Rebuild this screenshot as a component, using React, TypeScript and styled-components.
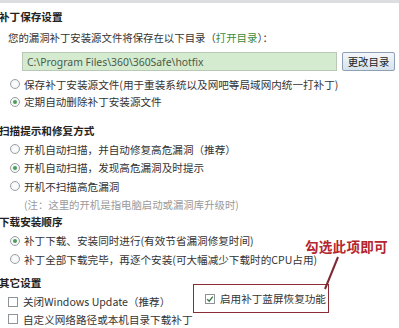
import React from "react";
import styled, { createGlobalStyle } from "styled-components";

const Global = createGlobalStyle`
  html, body { margin: 0; padding: 0; background: #ffffff; }
  body { font-family: "Noto Sans CJK SC", "Noto Sans", sans-serif; color: #333; }
  * { box-sizing: border-box; }
`;

const Page = styled.div`
  position: relative;
  width: 399px;
  height: 328px;
  overflow: hidden;
  background: #fff;
  display: flex;
  flex-direction: column;
`;

const TopLine = styled.div`
  height: 3px;
  background: #dcdfe0;
  flex: none;
`;

const Heading = styled.div<{ $mt: number }>`
  height: 18px;
  margin-top: ${(p) => p.$mt}px;
  margin-left: -1px;
  display: flex;
  align-items: center;
  font-size: 10.6px;
  font-weight: 700;
  color: #222;
  white-space: nowrap;
`;

const Desc = styled.div`
  height: 18px;
  margin-top: 3px;
  padding-left: 8px;
  display: flex;
  align-items: center;
  font-size: 10.4px;
  color: #333;
  white-space: nowrap;
`;

const Link = styled.span`
  color: #3d8a3a;
`;

const InputRow = styled.div`
  margin-top: 6px;
  height: 20px;
  display: flex;
  align-items: stretch;
  padding-left: 22px;
  gap: 5px;
`;

const PathBox = styled.div`
  width: 315px;
  background: #d4ebcf;
  border: 1px solid #b8c8b4;
  display: flex;
  align-items: center;
  padding-left: 4px;
  font-family: "Noto Sans", "DejaVu Sans", sans-serif;
  font-size: 10.4px;
  color: #4b5a49;
  white-space: nowrap;
`;

const Button = styled.div`
  width: 53px;
  border: 1px solid #8c9fb4;
  border-radius: 2px;
  background: linear-gradient(#f4f7fa, #d6e2ec);
  display: flex;
  align-items: center;
  justify-content: center;
  font-size: 10.4px;
  color: #222;
`;

const Row = styled.div<{ $h?: number; $mt?: number }>`
  height: ${(p) => p.$h ?? 19}px;
  margin-top: ${(p) => p.$mt ?? 0}px;
  display: flex;
  align-items: center;
  padding-left: 10px;
  font-size: 10.6px;
  color: #333;
  white-space: nowrap;
`;

const Radio = styled.span<{ $on?: boolean }>`
  width: 10px;
  height: 10px;
  border-radius: 50%;
  border: 1px solid #9aa0a4;
  background: radial-gradient(circle, #ffffff 0%, #eef0f1 100%);
  display: inline-flex;
  align-items: center;
  justify-content: center;
  margin-right: 4px;
  flex: none;
  &::after {
    content: "";
    display: ${(p) => (p.$on ? "block" : "none")};
    width: 4px;
    height: 4px;
    border-radius: 50%;
    background: #4a9a5a;
  }
`;

const Note = styled.div`
  height: 18px;
  padding-left: 24px;
  display: flex;
  align-items: center;
  font-size: 10.4px;
  color: #9a9a9a;
  white-space: nowrap;
`;

const CheckRow = styled.div`
  position: relative;
  height: 18px;
  display: flex;
  align-items: center;
  padding-left: 8px;
  font-size: 10.6px;
  color: #333;
  white-space: nowrap;
`;

const Check = styled.span`
  width: 10px;
  height: 10px;
  border: 1px solid #8d9396;
  background: #fff;
  margin-right: 5px;
  flex: none;
  display: inline-flex;
  align-items: center;
  justify-content: center;
`;

const HighlightBox = styled.div`
  position: absolute;
  left: 193px;
  top: -9px;
  width: 136px;
  height: 29px;
  border: 1.5px solid #8a2c36;
  background: #fff;
  display: flex;
  align-items: center;
  padding-left: 11px;
  font-size: 10.6px;
  color: #333;
`;

const Annotation = styled.div`
  position: absolute;
  left: 305px;
  top: 236px;
  font-size: 13.6px;
  font-weight: 700;
  color: #b3262f;
  white-space: nowrap;
  letter-spacing: 0.2px;
`;

const Pointer = styled.svg`
  position: absolute;
  left: 318px;
  top: 252px;
`;

export default function App() {
  return (
    <>
      <Global />
      <Page>
        <TopLine />
        <Heading $mt={5}>补丁保存设置</Heading>
        <Desc>
          您的漏洞补丁安装源文件将保存在以下目录（<Link>打开目录</Link>）：
        </Desc>
        <InputRow>
          <PathBox>C:\Program Files\360\360Safe\hotfix</PathBox>
          <Button>更改目录</Button>
        </InputRow>
        <Row $h={18} $mt={4}>
          <Radio />
          保存补丁安装源文件(用于重装系统以及网吧等局域网内统一打补丁)
        </Row>
        <Row $h={18}>
          <Radio $on />
          定期自动删除补丁安装源文件
        </Row>
        <Heading $mt={11}>扫描提示和修复方式</Heading>
        <Row $mt={1}>
          <Radio />
          开机自动扫描，并自动修复高危漏洞（推荐）
        </Row>
        <Row>
          <Radio $on />
          开机自动扫描，发现高危漏洞及时提示
        </Row>
        <Row>
          <Radio />
          开机不扫描高危漏洞
        </Row>
        <Note>(注：这里的开机是指电脑启动或漏洞库升级时)</Note>
        <Heading $mt={0}>下载安装顺序</Heading>
        <Row $mt={1}>
          <Radio $on />
          补丁下载、安装同时进行(有效节省漏洞修复时间)
        </Row>
        <Row>
          <Radio />
          补丁全部下载完毕，再逐个安装(可大幅减少下载时的CPU占用)
        </Row>
        <Heading $mt={5}>其它设置</Heading>
        <CheckRow style={{ marginTop: 2 }}>
          <Check />
          关闭Windows Update（推荐）
          <HighlightBox>
            <Check>
              <svg width="8" height="8" viewBox="0 0 8 8">
                <path d="M1.2 4.2 L3.2 6.2 L6.8 1.6" fill="none" stroke="#3d7a4a" strokeWidth="1.4" />
              </svg>
            </Check>
            启用补丁蓝屏恢复功能
          </HighlightBox>
        </CheckRow>
        <CheckRow>
          <Check />
          自定义网络路径或本机目录下载补丁
        </CheckRow>
        <Annotation>勾选此项即可</Annotation>
        <Pointer width="24" height="40" viewBox="0 0 24 40">
          <line x1="20" y1="5" x2="7" y2="37" stroke="#7d2833" strokeWidth="2" />
        </Pointer>
      </Page>
    </>
  );
}
